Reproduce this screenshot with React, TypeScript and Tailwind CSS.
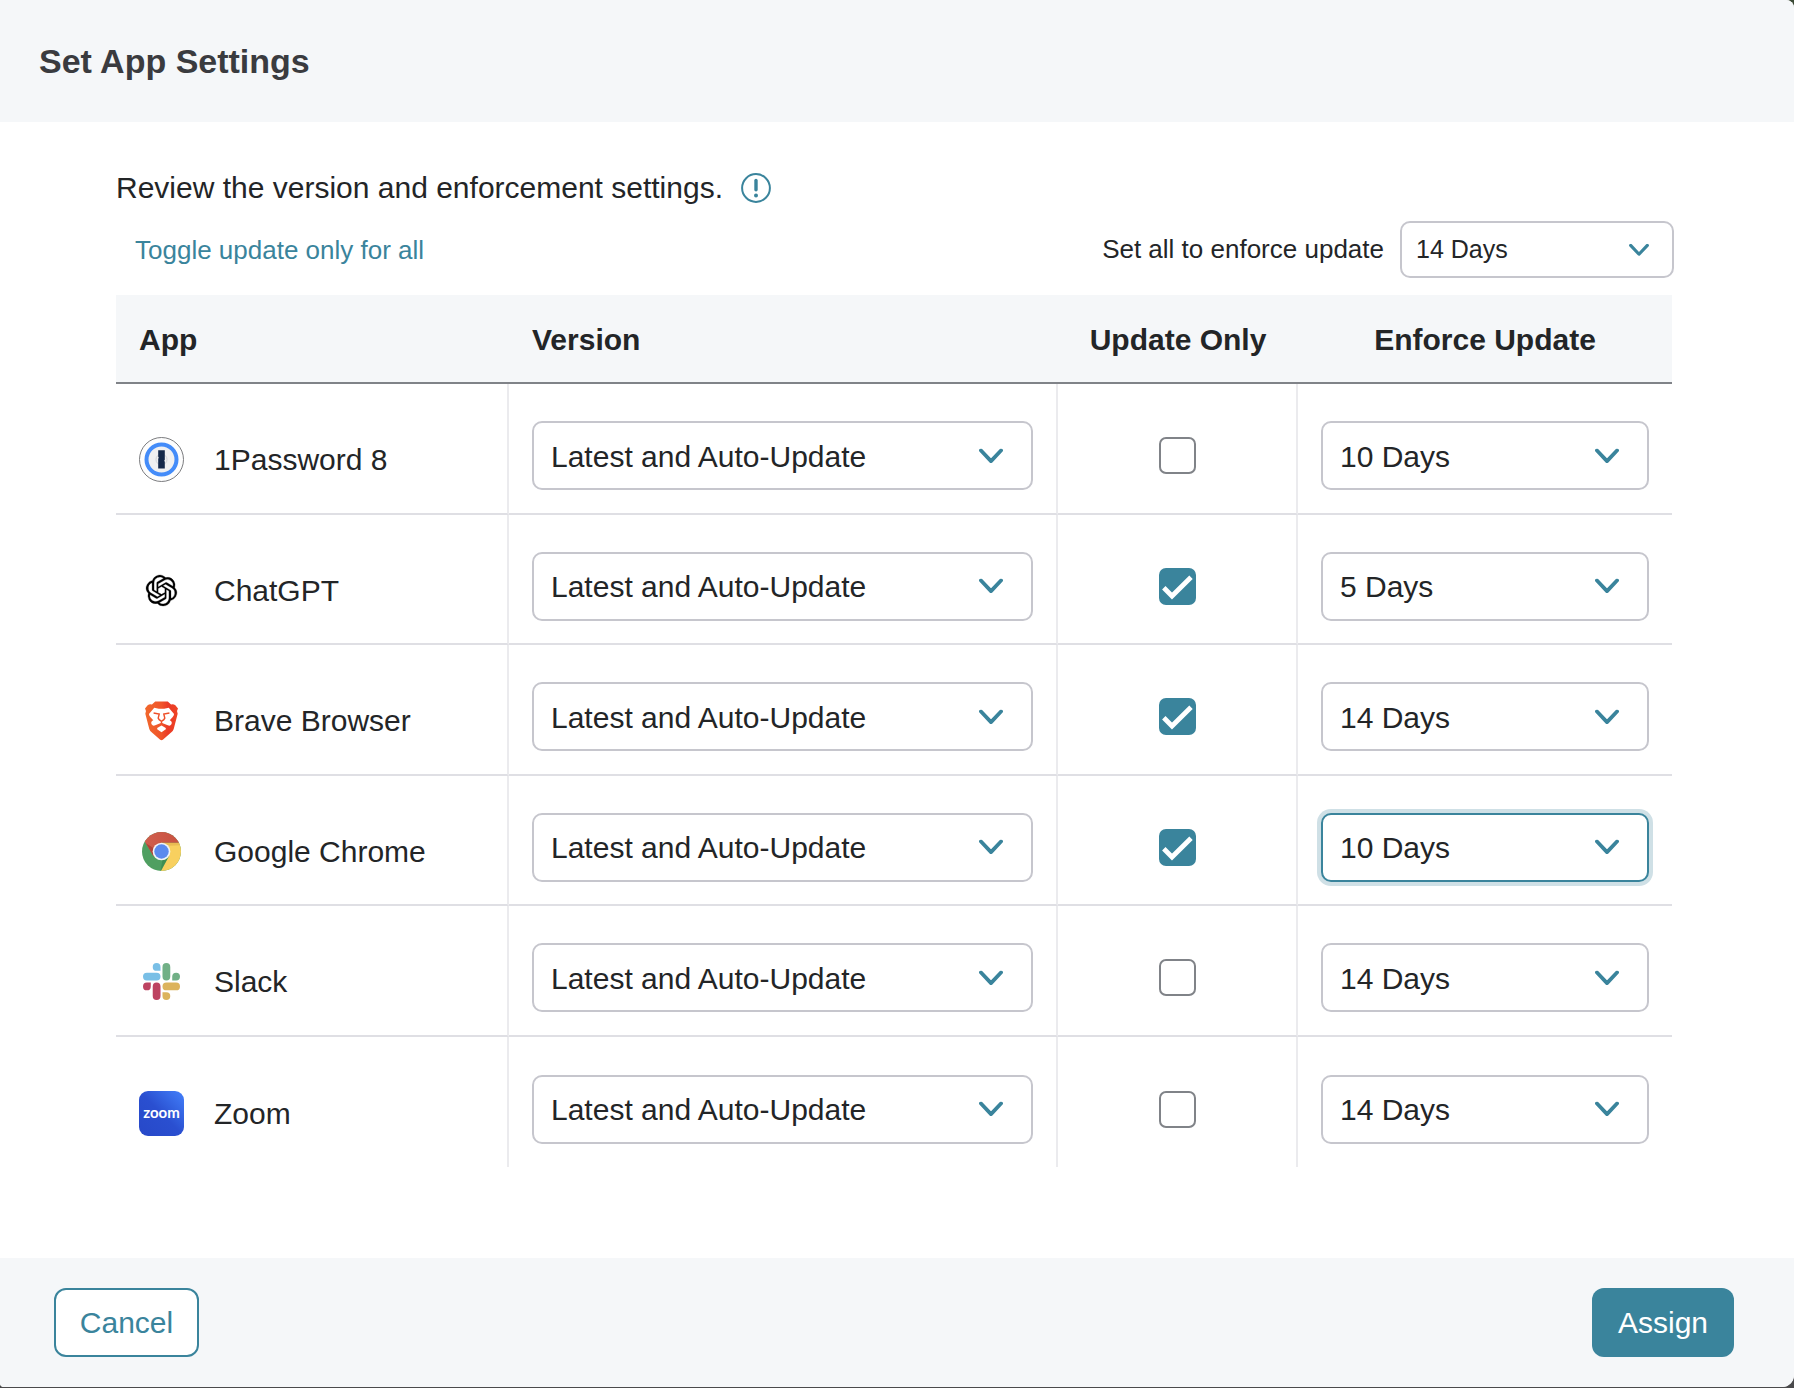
import React, { useState } from "react";
import { SiOpenai } from "react-icons/si";

const OnePasswordIcon = () => (
  <svg viewBox="0 0 45 45" className="size-[45px]">
    <circle cx="22.5" cy="22.5" r="22" fill="#fdfdfd" stroke="#6c6d70" strokeWidth="0.9" />
    <circle cx="22.5" cy="22.5" r="15" fill="#f0f0f1" stroke="#448cf9" strokeWidth="4" />
    <circle cx="22.5" cy="22.5" r="5.5" fill="none" stroke="#c9cbcf" strokeWidth="0.8" />
    <path d="M19.2 13.2h6.6v9.6l-.6 1 .6 1v6.6h-6.6v-9.6l.6-1-.6-1z" fill="#15294a" />
  </svg>
);

const BraveIcon = () => (
  <svg viewBox="0 0 100 120" className="h-[40px] w-[33px]">
    <defs>
      <linearGradient id="brave" x1="0" x2="1" y1="0" y2="0">
        <stop offset="0" stopColor="#f1682c" />
        <stop offset="0.5" stopColor="#f0542a" />
        <stop offset="0.7" stopColor="#ea3a26" />
        <stop offset="1" stopColor="#ee4425" />
      </linearGradient>
    </defs>
    <path
      fill="url(#brave)"
      d="M31 1H69L79 10Q86 8 92 12L100 22L97 30L99 38L87 84Q85 90 79 95L54 117Q50 120 46 117L21 95Q15 90 13 84L1 38L3 30L0 22L8 12Q14 8 21 10Z"
    />
    <path
      fill="white"
      d="M28 20L42 23H58L72 20L88 39Q88 44 84 48L75 58Q84 62 80 70Q76 77 69 73L50 65L31 73Q24 77 20 70Q16 62 25 58L16 48Q12 44 12 39Z"
    />
    <path fill="white" d="M37 81L50 74L63 81V85L50 94L37 85Z" />
    <path
      fill="none"
      stroke="#ee4f29"
      strokeWidth="4.4"
      d="M26 36L43 39L40 51L43 56L50 61L57 56L60 51L57 39L74 36M50 60V70"
    />
  </svg>
);

const ChromeIcon = () => (
  <svg viewBox="0 0 40 40" className="size-[39px]">
    <defs>
      <linearGradient id="chromeRed" x1="0" x2="1" y1="0" y2="0">
        <stop offset="0" stopColor="#d0604f" />
        <stop offset="1" stopColor="#c9503f" />
      </linearGradient>
      <clipPath id="chromeDisc">
        <circle cx="20" cy="20" r="20" />
      </clipPath>
    </defs>
    <g clipPath="url(#chromeDisc)">
      <rect width="40" height="40" fill="#4f9f61" />
      <path d="M28 24 L19 41 H41 V11 H20z" fill="#f8d05f" />
      <path d="M2.6 9.5 L12 25 L20 11 H40 V-1 H0z" fill="url(#chromeRed)" />
      <path d="M4 11.5 L12 25 L12.5 17z" fill="#b04437" />
      <path d="M19 40 L27.5 25 L21 28.5z" fill="#2f7d44" opacity="0.5" />
      <path d="M20 11 H38.4 L39 13.5 L27 14z" fill="#d9a648" opacity="0.5" />
    </g>
    <circle cx="20" cy="20" r="9.1" fill="#f2f4f6" />
    <circle cx="20" cy="20" r="7.4" fill="#5b8aee" />
  </svg>
);

const SlackIcon = () => (
  <svg viewBox="0 0 24 24" className="size-[37px]">
    <path
      fill="#bd4361"
      d="M5.042 15.165a2.528 2.528 0 0 1-2.52 2.523A2.528 2.528 0 0 1 0 15.165a2.527 2.527 0 0 1 2.522-2.52h2.52v2.52zM6.313 15.165a2.527 2.527 0 0 1 2.521-2.52 2.527 2.527 0 0 1 2.521 2.52v6.313A2.528 2.528 0 0 1 8.834 24a2.528 2.528 0 0 1-2.521-2.522v-6.313z"
    />
    <path
      fill="#79bfe6"
      d="M8.834 5.042a2.528 2.528 0 0 1-2.521-2.52A2.528 2.528 0 0 1 8.834 0a2.528 2.528 0 0 1 2.521 2.522v2.52H8.834zM8.834 6.313a2.528 2.528 0 0 1 2.521 2.521 2.528 2.528 0 0 1-2.521 2.521H2.522A2.528 2.528 0 0 1 0 8.834a2.528 2.528 0 0 1 2.522-2.521h6.312z"
    />
    <path
      fill="#71b086"
      d="M18.956 8.834a2.528 2.528 0 0 1 2.522-2.521A2.528 2.528 0 0 1 24 8.834a2.528 2.528 0 0 1-2.522 2.521h-2.522V8.834zM17.688 8.834a2.528 2.528 0 0 1-2.523 2.521 2.527 2.527 0 0 1-2.52-2.521V2.522A2.527 2.527 0 0 1 15.165 0a2.528 2.528 0 0 1 2.523 2.522v6.312z"
    />
    <path
      fill="#dcb35c"
      d="M15.165 18.956a2.528 2.528 0 0 1 2.523 2.522A2.528 2.528 0 0 1 15.165 24a2.527 2.527 0 0 1-2.52-2.522v-2.522h2.52zM15.165 17.688a2.527 2.527 0 0 1-2.52-2.523 2.526 2.526 0 0 1 2.52-2.52h6.313A2.527 2.527 0 0 1 24 15.165a2.528 2.528 0 0 1-2.522 2.523h-6.313z"
    />
  </svg>
);

const ZoomIcon = () => (
  <span className="flex size-[45px] items-center justify-center rounded-[9px] bg-linear-to-bl from-[#4480fb] via-[#2a4fd0] via-50% to-[#2748c8] pb-[2px] font-[Lato] text-[15px] leading-none font-bold text-white">
    zoom
  </span>
);

const apps = [
  { name: "1Password 8", icon: <OnePasswordIcon />, updateOnly: false, days: "10 Days" },
  {
    name: "ChatGPT",
    icon: <SiOpenai className="size-[31px] overflow-visible text-black" stroke="black" strokeWidth="0.2" />,
    updateOnly: true,
    days: "5 Days",
  },
  { name: "Brave Browser", icon: <BraveIcon />, updateOnly: true, days: "14 Days" },
  { name: "Google Chrome", icon: <ChromeIcon />, updateOnly: true, days: "10 Days", active: true },
  { name: "Slack", icon: <SlackIcon />, updateOnly: false, days: "14 Days" },
  { name: "Zoom", icon: <ZoomIcon />, updateOnly: false, days: "14 Days" },
];

const dayOptions = ["5 Days", "10 Days", "14 Days"];
const versionOptions = ["Latest and Auto-Update"];

type SelectProps = {
  id?: string;
  label?: string;
  options: string[];
  value: string;
  onChange?: (value: string) => void;
  size?: string;
  chevron?: string;
  active?: boolean;
};

const Select = ({
  id,
  label,
  options,
  value,
  onChange,
  size = "h-[69px] pl-[17px] text-[30px]",
  chevron = "right-[30px] w-[24px]",
  active,
}: SelectProps) => (
  <div className="relative">
    <select
      id={id}
      aria-label={label}
      value={value}
      onChange={(e) => onChange?.(e.target.value)}
      className={`block w-full appearance-none rounded-[10px] border-2 bg-white pt-px outline-none ${size} ${
        active ? "border-[#3a849c] ring-4 ring-[#cfe0e6]" : "border-[#c6c6cd]"
      }`}
    >
      {options.map((option) => (
        <option key={option}>{option}</option>
      ))}
    </select>
    <svg
      viewBox="0 0 24 15"
      className={`pointer-events-none absolute top-1/2 -translate-y-1/2 ${chevron}`}
      fill="none"
      stroke="#3a849c"
      strokeWidth="3.8"
      strokeLinecap="round"
      strokeLinejoin="round"
    >
      <path d="M2 2 L12 12.6 L22 2" />
    </svg>
  </div>
);

type CheckboxProps = {
  label: string;
  checked: boolean;
  onChange: () => void;
};

const Checkbox = ({ label, checked, onChange }: CheckboxProps) => (
  <span className="relative mx-auto block size-[37px]">
    <input
      type="checkbox"
      aria-label={label}
      checked={checked}
      onChange={onChange}
      className="block size-full appearance-none rounded-[7px] border-2 border-[#808388] bg-white checked:border-[#3a849c] checked:bg-[#3a849c]"
    />
    {checked && (
      <svg viewBox="0 0 37 37" className="pointer-events-none absolute inset-0" fill="none" stroke="white" strokeWidth="4.8">
        <path d="M4.8 19.8 L13 28 L32 9.2" />
      </svg>
    )}
  </span>
);

export default function App() {
  const [rows, setRows] = useState(apps);
  const [allDays, setAllDays] = useState("14 Days");

  const update = (index: number, patch: Partial<(typeof apps)[number]>) =>
    setRows(rows.map((row, i) => (i === index ? { ...row, ...patch } : row)));

  return (
    <div className="min-h-screen bg-linear-to-b from-[#3b4a35] to-[#4a4a4c] pb-px font-['Liberation_Sans',Arial,sans-serif] text-[#232527]">
      <div className="flex min-h-[calc(100vh-1px)] flex-col overflow-hidden rounded-tr-lg rounded-br-xl rounded-bl-sm bg-white">
        <header className="flex h-[122px] items-center bg-[#f5f7f9] px-[39px]">
          <h1 className="text-[34px] font-bold text-[#3a3b3f]">Set App Settings</h1>
        </header>

        <main className="flex-1 pr-[122px] pb-[88px] pl-[116px]">
          <div className="flex items-center gap-[18px] pt-11">
            <p className="text-[30px] leading-[44px]">Review the version and enforcement settings.</p>
            <svg viewBox="0 0 30 30" className="size-[30px]" fill="none" stroke="#3a849c">
              <circle cx="15" cy="15" r="13.9" strokeWidth="2" />
              <path d="M15 7.4v9.4" strokeWidth="3.4" strokeLinecap="round" />
              <circle cx="15" cy="22.4" r="2" fill="#3a849c" stroke="none" />
            </svg>
          </div>

          <div className="mt-[11px] -mr-[2px] mb-[17px] flex items-center justify-between pl-[19px]">
            <button
              type="button"
              className="pt-[2px] text-[26px] text-[#3a849c]"
              onClick={() => setRows(rows.map((row) => ({ ...row, updateOnly: !row.updateOnly })))}
            >
              Toggle update only for all
            </button>
            <div className="flex items-center gap-4">
              <label htmlFor="all-days" className="text-[26px]">
                Set all to enforce update
              </label>
              <div className="w-[274px]">
                <Select
                  id="all-days"
                  size="h-[57px] pl-[14px] text-[25px]"
                  chevron="right-[25px] w-[20px]"
                  options={dayOptions}
                  value={allDays}
                  onChange={(days) => {
                    setAllDays(days);
                    setRows(rows.map((row) => ({ ...row, days })));
                  }}
                />
              </div>
            </div>
          </div>

          <table className="w-full table-fixed border-separate border-spacing-0 text-[30px]">
            <colgroup>
              <col className="w-[393px]" />
              <col />
              <col className="w-[240px]" />
              <col className="w-[374px]" />
            </colgroup>
            <thead className="bg-[#f5f7f9]">
              <tr className="h-[89px] *:border-b-2 *:border-[#808388] *:pt-[2px] *:font-bold">
                <th className="pl-[23px] text-left">App</th>
                <th className="pl-[23px] text-left">Version</th>
                <th>Update Only</th>
                <th>Enforce Update</th>
              </tr>
            </thead>
            <tbody>
              {rows.map((app, index) => (
                <tr
                  key={app.name}
                  className="odd:h-[131px] even:h-[130px] *:border-b-2 *:border-[#dfdfe4] *:pt-[14px] *:not-last:border-r-2 *:not-last:border-r-[#ebebee] last:*:border-b-0"
                >
                  <td className="pl-[23px]">
                    <div className="flex items-center gap-[30px] pt-2">
                      <span className="flex size-[45px] items-center justify-center">{app.icon}</span>
                      {app.name}
                    </div>
                  </td>
                  <td className="px-[23px]">
                    <Select label={`${app.name} version`} options={versionOptions} value="Latest and Auto-Update" />
                  </td>
                  <td>
                    <Checkbox
                      label={`${app.name} update only`}
                      checked={app.updateOnly}
                      onChange={() => update(index, { updateOnly: !app.updateOnly })}
                    />
                  </td>
                  <td className="px-[23px]">
                    <Select
                      label={`${app.name} enforce update`}
                      options={dayOptions}
                      value={app.days}
                      active={app.active}
                      onChange={(days) => update(index, { days })}
                    />
                  </td>
                </tr>
              ))}
            </tbody>
          </table>
        </main>

        <footer className="flex h-[129px] items-center justify-between bg-[#f5f7f9] pr-[60px] pl-[54px]">
          <button
            type="button"
            className="h-[69px] w-[145px] rounded-[12px] border-2 border-[#3a849c] bg-white text-[30px] text-[#3a849c]"
          >
            Cancel
          </button>
          <button type="button" className="h-[69px] w-[142px] rounded-[12px] bg-[#3a849c] text-[30px] text-white">
            Assign
          </button>
        </footer>
      </div>
    </div>
  );
}
